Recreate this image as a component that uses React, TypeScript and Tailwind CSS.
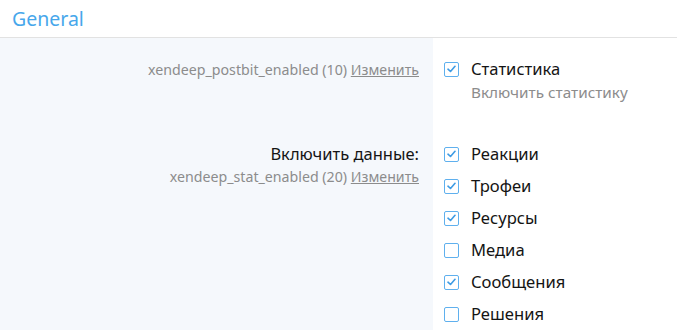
import React from "react";

const font = { fontFamily: '"Noto Sans", "Liberation Sans", sans-serif' };

function Box({ checked }: { checked: boolean }) {
  return (
    <span className="flex h-[15px] w-[15px] shrink-0 items-center justify-center rounded-[2px] border-[1.5px] border-[#5fb0ee] bg-white">
      {checked ? (
        <svg width="9" height="8" viewBox="0 0 9 8" fill="none">
          <path d="M1 4.2 L3.5 6.5 L8 1.3" stroke="#3d9be4" strokeWidth="1.6" strokeLinecap="round" strokeLinejoin="round" />
        </svg>
      ) : null}
    </span>
  );
}

const choices = [
  { label: "Реакции", checked: true },
  { label: "Трофеи", checked: true },
  { label: "Ресурсы", checked: true },
  { label: "Медиа", checked: false },
  { label: "Сообщения", checked: true },
  { label: "Решения", checked: false },
];

export default function App() {
  return (
    <div className="w-full bg-white text-[#141414]" style={font}>
      <div className="flex h-[38px] items-center border-b border-[#e2e2e2] px-3">
        <h2 className="text-[19.5px] leading-none text-[#47a7eb]">General</h2>
      </div>

      <div className="flex">
        <div className="w-[433px] shrink-0 bg-[#f5f8fc] pt-4 pr-[14px] text-right">
          <div className="text-[14.2px] leading-8 text-[#8c8c8c]">
            xendeep_postbit_enabled (10) <span className="underline">Изменить</span>
          </div>
        </div>
        <div className="flex-1 pt-[15px] pb-[26px] pl-[11px]">
          <label className="flex h-8 items-center gap-[12px] text-[16.6px]">
            <Box checked />
            Статистика
          </label>
          <div className="-mt-[3px] pl-[27px] text-[15.3px] leading-5 text-[#8c8c8c]">Включить статистику</div>
        </div>
      </div>

      <div className="flex">
        <div className="w-[433px] shrink-0 bg-[#f5f8fc] pt-[10px] pr-[14px] text-right">
          <div className="text-[16.5px] leading-8">Включить данные:</div>
          <div className="-mt-[3px] text-[14.2px] leading-5 text-[#8c8c8c]">
            xendeep_stat_enabled (20) <span className="underline">Изменить</span>
          </div>
        </div>
        <div className="flex-1 pt-[10px] pl-[11px]">
          {choices.map((c) => (
            <label key={c.label} className="flex h-8 items-center gap-[12px] text-[16.6px]">
              <Box checked={c.checked} />
              {c.label}
            </label>
          ))}
        </div>
      </div>
    </div>
  );
}
